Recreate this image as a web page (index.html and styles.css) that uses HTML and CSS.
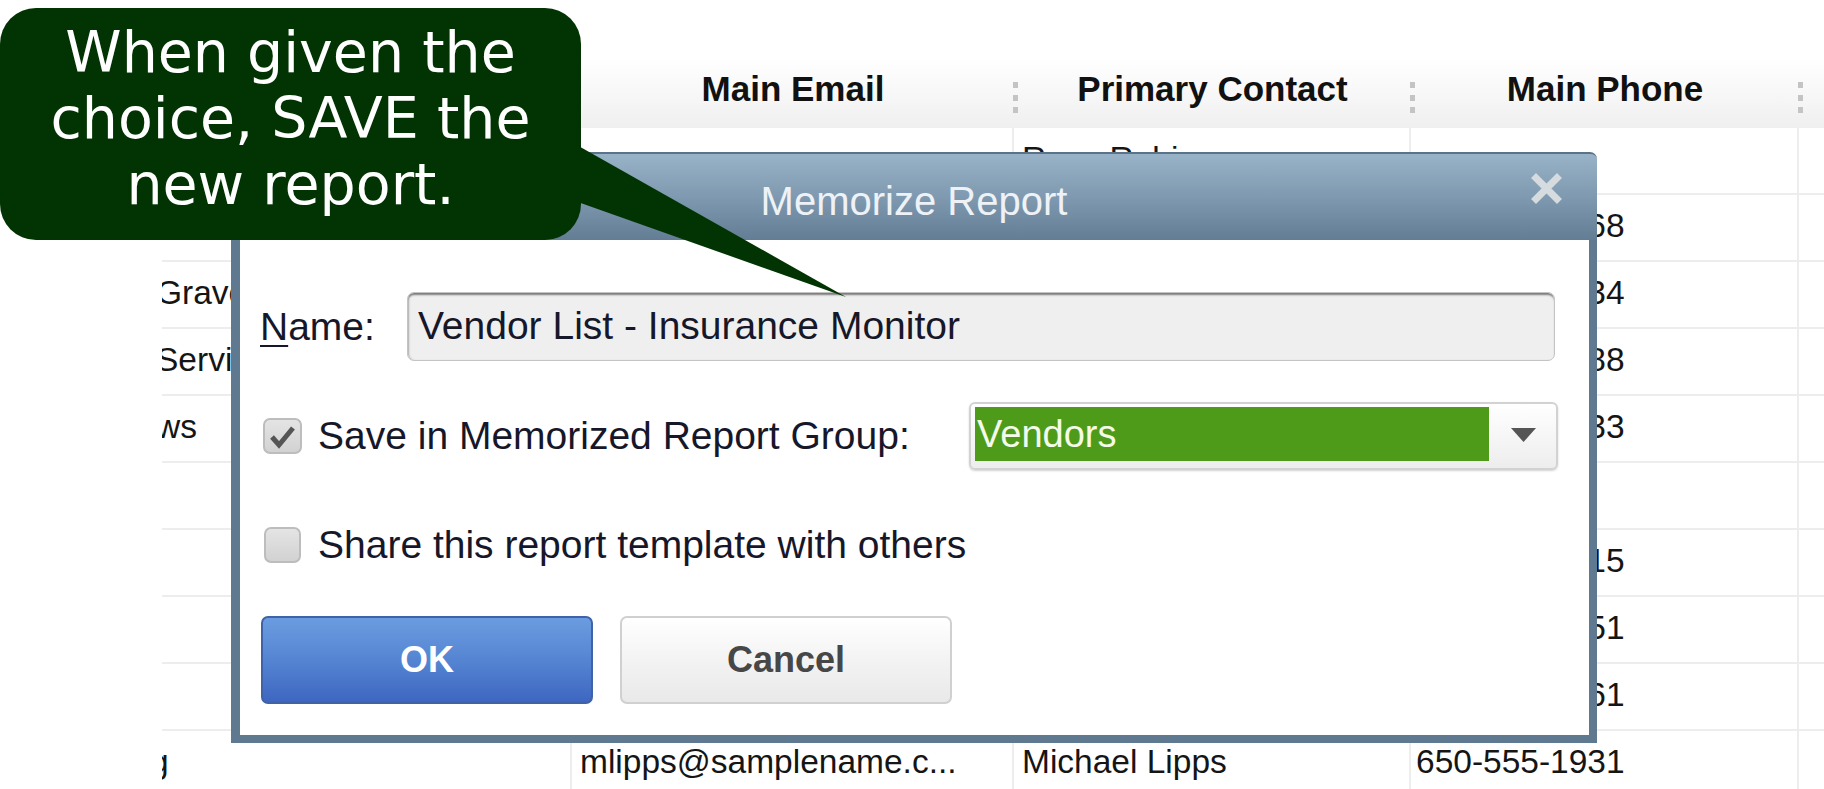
FILE: index.html
```html
<!DOCTYPE html>
<html>
<head>
<meta charset="utf-8">
<link rel="stylesheet" href="styles.css">
</head>
<body>
<div class="screen">
  <div class="grid">
    <div class="row head">
      <div class="c c1"></div>
      <div class="c c2">Main Email</div>
      <div class="c c3">Primary Contact</div>
      <div class="c c4">Main Phone</div>
      <div class="c c5"></div>
    </div>
    <div class="row"><div class="c c1"></div><div class="c c2"></div><div class="c c3">Rose Robinson</div><div class="c c4"></div><div class="c c5"></div></div>
    <div class="row"><div class="c c1"></div><div class="c c2"></div><div class="c c3"></div><div class="c c4">650-555-7768</div><div class="c c5"></div></div>
    <div class="row"><div class="c c1"><span class="cut">Graves</span></div><div class="c c2"></div><div class="c c3"></div><div class="c c4">650-555-1234</div><div class="c c5"></div></div>
    <div class="row"><div class="c c1"><span class="cut">Services</span></div><div class="c c2"></div><div class="c c3"></div><div class="c c4">650-555-2388</div><div class="c c5"></div></div>
    <div class="row"><div class="c c1"><span class="cut">ws</span></div><div class="c c2"></div><div class="c c3"></div><div class="c c4">650-555-9033</div><div class="c c5"></div></div>
    <div class="row"><div class="c c1"></div><div class="c c2"></div><div class="c c3"></div><div class="c c4"></div><div class="c c5"></div></div>
    <div class="row"><div class="c c1"></div><div class="c c2"></div><div class="c c3"></div><div class="c c4">650-555-7715</div><div class="c c5"></div></div>
    <div class="row"><div class="c c1"></div><div class="c c2"></div><div class="c c3"></div><div class="c c4">650-555-4251</div><div class="c c5"></div></div>
    <div class="row"><div class="c c1"></div><div class="c c2"></div><div class="c c3"></div><div class="c c4">650-555-8861</div><div class="c c5"></div></div>
    <div class="row"><div class="c c1"><span class="cut far">g</span></div><div class="c c2">mlipps@samplename.c...</div><div class="c c3">Michael Lipps</div><div class="c c4">650-555-1931</div><div class="c c5"></div></div>
  </div>

  <div class="dialog">
    <div class="titlebar">
      <span class="title">Memorize Report</span>
      <svg class="close" width="31" height="31" viewBox="0 0 31 31"><path d="M5 5 L26 26 M26 5 L5 26" stroke="#d6dbe0" stroke-width="7" stroke-linecap="square"/></svg>
    </div>
    <div class="body">
      <div class="line name-line">
        <label class="lbl name-lbl"><u>N</u>ame:</label>
        <div class="input">Vendor List - Insurance Monitor</div>
      </div>
      <div class="line group-line">
        <span class="box checked"><svg width="39" height="36" viewBox="0 0 39 36"><path d="M9 19 L16 27 L30 10" fill="none" stroke="#555" stroke-width="5"/></svg></span>
        <span class="lbl chk-lbl">Save in Memorized Report Group:</span>
        <div class="select">
          <div class="sel-value">Vendors</div>
          <div class="sel-arrow"><svg width="25" height="14" viewBox="0 0 25 14"><path d="M0 0 L25 0 L12.5 14 Z" fill="#555"/></svg></div>
        </div>
      </div>
      <div class="line share-line">
        <span class="box"></span>
        <span class="lbl chk-lbl">Share this report template with others</span>
      </div>
      <div class="line btn-line">
        <div class="btn ok">OK</div>
        <div class="btn cancel">Cancel</div>
      </div>
    </div>
  </div>

  <div class="callout">
    <div class="callout-text">When given the<br>choice, SAVE the<br>new report.</div>
  </div>
  <svg class="tail" width="290" height="165" viewBox="0 0 290 165"><polygon points="10,4 281,157 10,61" fill="#023302"/></svg>
</div>
</body>
</html>
```

FILE: styles.css
```css
html, body {
  margin: 0;
  padding: 0;
}
body {
  width: 1824px;
  height: 789px;
  overflow: hidden;
  background: #ffffff;
  font-family: "Liberation Sans", Arial, sans-serif;
}
.screen {
  position: relative;
  width: 1824px;
  height: 789px;
  overflow: hidden;
  background: #ffffff;
}

/* background table */
.grid {
  margin-left: 162px;
  padding-top: 58px;
  width: 1662px;
  overflow: hidden;
}
.row {
  display: flex;
  height: 67px;
}
.c {
  box-sizing: border-box;
  flex: none;
  height: 67px;
  border-bottom: 2px solid #ededed;
  border-right: 2px solid #ededed;
  line-height: 62px;
  font-size: 33.5px;
  color: #151515;
  white-space: nowrap;
  overflow: hidden;
  padding-left: 8px;
}
.c1 { width: 410px; padding-left: 0; }
.c2 { width: 442px; }
.c3 { width: 397px; }
.c4 { width: 388px; padding-left: 5px; }
.c5 { width: 200px; }
.cut {
  display: inline-block;
  margin-left: -6px;
}
.cut.far { margin-left: -12px; }

.row.head {
  height: 70px;
  background: linear-gradient(#ffffff, #f6f6f6 60%, #efefef);
}
.head .c {
  height: 70px;
  border: none;
  font-weight: bold;
  font-size: 35px;
  color: #111111;
  text-align: center;
  padding-left: 0;
  position: relative;
  overflow: visible;
}
.head .c2::after,
.head .c3::after,
.head .c4::after {
  content: "";
  position: absolute;
  right: -4px;
  top: 24px;
  width: 5px;
  height: 32px;
  background: repeating-linear-gradient(to bottom, #c4c4c4 0 6px, transparent 6px 12.5px);
}

/* dialog window */
.dialog {
  position: absolute;
  left: 231px;
  top: 152px;
  width: 1366px;
}
.titlebar {
  position: relative;
  height: 88px;
  box-sizing: border-box;
  border-top: 2px solid #5b7389;
  border-radius: 7px 7px 0 0;
  background: linear-gradient(#98b2c7, #7f9ab0 50%, #627d94);
  text-align: center;
}
.title {
  display: inline-block;
  padding-top: 8px;
  line-height: 78px;
  font-size: 40px;
  color: #eef2f6;
}
.close {
  position: absolute;
  right: 35px;
  top: 19px;
}
.body {
  box-sizing: border-box;
  height: 503px;
  background: #ffffff;
  border-left: 9px solid #5f7a90;
  border-right: 8px solid #5f7a90;
  border-bottom: 8px solid #5f7a90;
  padding: 52px 31px 0 20px;
}
.line {
  display: flex;
  align-items: center;
}
.lbl {
  font-size: 39px;
  color: #17172a;
  white-space: nowrap;
}
.name-line { height: 69px; }
.name-lbl { width: 147px; flex: none; }
.name-lbl u { text-decoration-thickness: 2px; text-underline-offset: 5px; }
.input {
  box-sizing: border-box;
  flex: 1;
  margin-right: 3px;
  height: 69px;
  border: 1px solid #c4c4c4;
  border-radius: 7px;
  background: #efefef;
  box-shadow: inset 0 3px 2px -1px #7a7a7a, inset 2px 0 2px -1px #b0b0b0;
  padding-left: 10px;
  font-size: 39px;
  line-height: 66px;
  color: #17172a;
  white-space: nowrap;
}

.group-line { margin-top: 41px; height: 68px; }
.box {
  box-sizing: border-box;
  flex: none;
  display: block;
  width: 39px;
  height: 36px;
  margin-left: 3px;
  border: 2px solid #bdbdbd;
  border-radius: 7px;
  background: linear-gradient(#e4e4e4, #d2d2d2);
  position: relative;
}
.box svg {
  position: absolute;
  left: -2px;
  top: -2px;
}
.chk-lbl { margin-left: 16px; }
.select {
  box-sizing: border-box;
  margin-left: auto;
  width: 589px;
  height: 68px;
  border: 2px solid #d2d2d2;
  border-radius: 6px;
  box-shadow: 0 1px 2px rgba(0, 0, 0, 0.18);
  background: linear-gradient(#ffffff, #ededed);
  padding: 3px 0 7px 4px;
  display: flex;
}
.sel-value {
  width: 514px;
  flex: none;
  background: #4e9b1a;
  color: #f4fbe9;
  font-size: 38px;
  line-height: 54px;
  padding-left: 2px;
  box-sizing: border-box;
}
.sel-arrow {
  flex: 1;
  display: flex;
  align-items: center;
  justify-content: center;
  padding-left: 2px;
  padding-top: 2px;
}

.share-line { margin-top: 57px; height: 36px; }
.share-line .box { margin-left: 4px; width: 37px; height: 36px; }
.share-line .chk-lbl { margin-left: 17px; }

.btn-line { margin-top: 53px; height: 88px; }
.btn {
  box-sizing: border-box;
  width: 332px;
  height: 88px;
  border-radius: 7px;
  text-align: center;
  font-weight: bold;
  font-size: 36px;
  line-height: 84px;
}
.ok {
  margin-left: 1px;
  border: 2px solid #3f62a8;
  background: linear-gradient(#6b9ce0, #5585d2 50%, #3e66c1);
  color: #ffffff;
}
.cancel {
  margin-left: 27px;
  border: 2px solid #d0d0d0;
  background: linear-gradient(#ffffff, #f3f3f3 50%, #e9e9e9);
  color: #474747;
}

/* annotation callout */
.callout {
  position: absolute;
  left: 0;
  top: 8px;
  width: 581px;
  height: 232px;
  border-radius: 36px;
  background: #023302;
}
.callout-text {
  padding-top: 11px;
  text-align: center;
  font-family: "DejaVu Sans", sans-serif;
  font-size: 57px;
  line-height: 66px;
  color: #ffffff;
}
.tail {
  position: absolute;
  left: 565px;
  top: 140px;
}
```
